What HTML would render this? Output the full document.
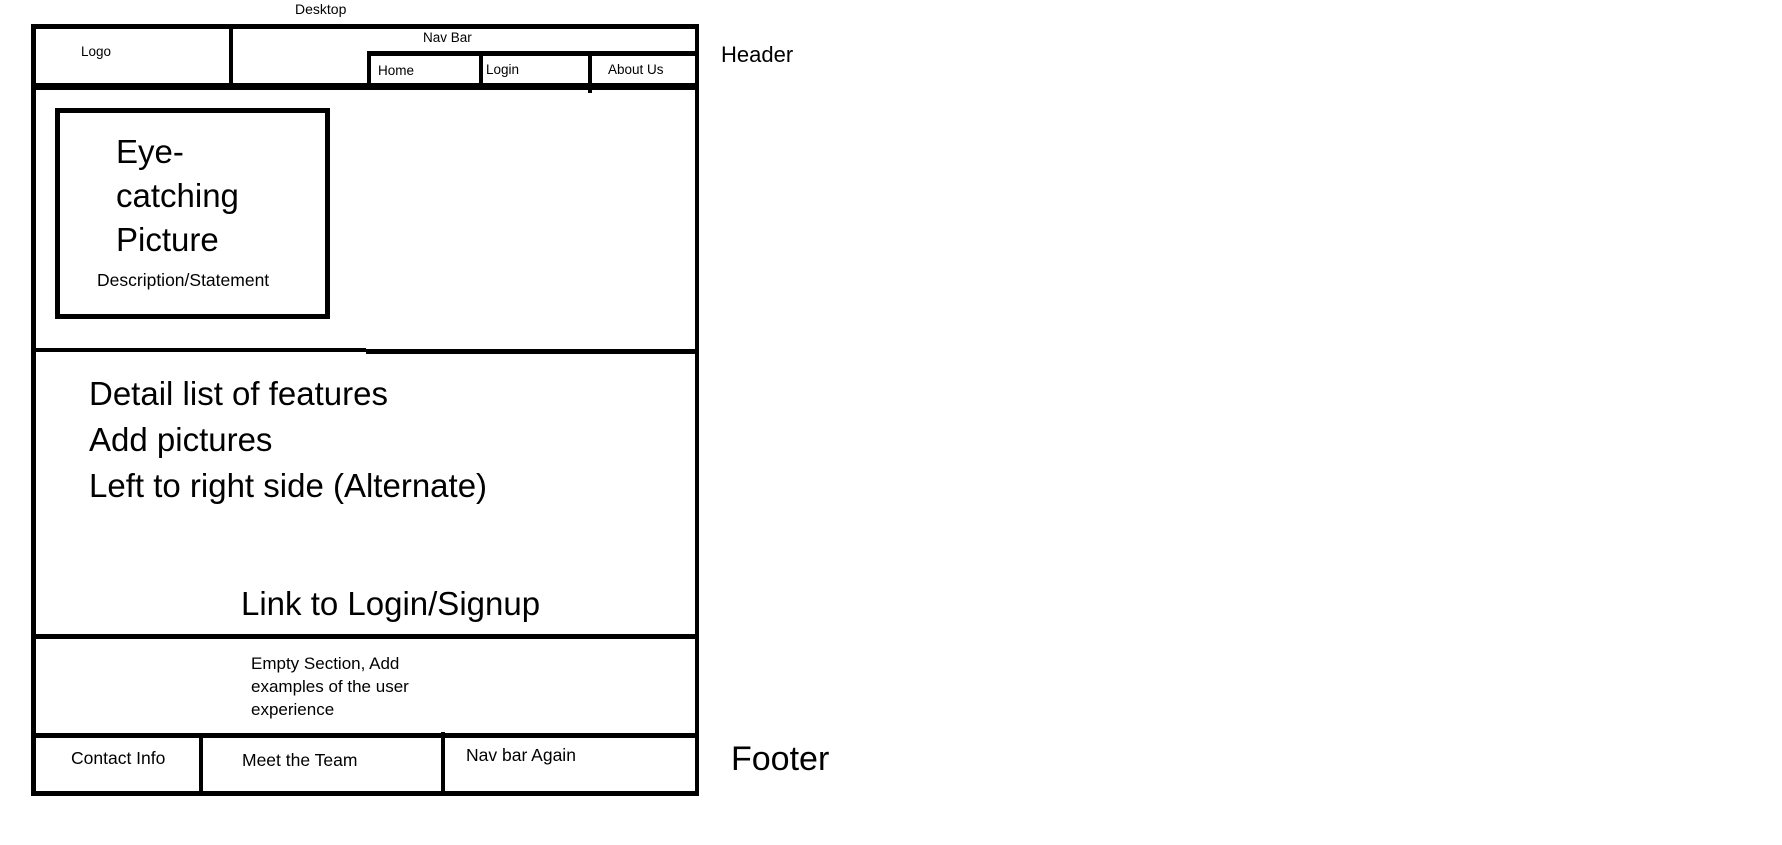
<!DOCTYPE html>
<html><head><meta charset="utf-8"><style>
html,body{margin:0;padding:0;background:#fff;width:1782px;height:845px;overflow:hidden;position:relative;font-family:"Liberation Sans",sans-serif;color:#000}
.b{position:absolute;background:#000}
.t{position:absolute;white-space:nowrap;line-height:1}
</style></head><body>
<div class="t" style="left:295px;top:2px;font-size:14px">Desktop</div>
<div class="b" style="left:31px;top:24px;width:668px;height:5px"></div>
<div class="b" style="left:31px;top:24px;width:5px;height:772px"></div>
<div class="b" style="left:695px;top:24px;width:4px;height:772px"></div>
<div class="b" style="left:31px;top:791px;width:668px;height:5px"></div>
<div class="b" style="left:229px;top:24px;width:4px;height:62px"></div>
<div class="b" style="left:367px;top:51px;width:332px;height:5px"></div>
<div class="b" style="left:367px;top:51px;width:4px;height:36px"></div>
<div class="b" style="left:479px;top:53px;width:4px;height:34px"></div>
<div class="b" style="left:588px;top:53px;width:4px;height:40px"></div>
<div class="b" style="left:31px;top:83px;width:668px;height:7px"></div>
<div class="t" style="left:423px;top:31px;font-size:13.5px">Nav Bar</div>
<div class="t" style="left:81px;top:45px;font-size:13.5px">Logo</div>
<div class="t" style="left:378px;top:64px;font-size:13.5px">Home</div>
<div class="t" style="left:486px;top:63px;font-size:13.5px">Login</div>
<div class="t" style="left:608px;top:63px;font-size:13.5px">About Us</div>
<div class="t" style="left:721px;top:44px;font-size:22px">Header</div>
<div style="position:absolute;left:55px;top:108px;width:265px;height:201px;border:5px solid #000"></div>
<div class="t" style="left:116px;top:130px;font-size:33px;line-height:44px">Eye-<br>catching<br>Picture</div>
<div class="t" style="left:97px;top:272px;font-size:17.5px">Description/Statement</div>
<div class="b" style="left:31px;top:348px;width:335px;height:4px"></div>
<div class="b" style="left:366px;top:349px;width:333px;height:5px"></div>
<div class="t" style="left:89px;top:371px;font-size:33px;line-height:46px">Detail list of features<br>Add pictures<br>Left to right side (Alternate)</div>
<div class="t" style="left:241px;top:587px;font-size:33px">Link to Login/Signup</div>
<div class="b" style="left:31px;top:634px;width:668px;height:5px"></div>
<div class="t" style="left:251px;top:652px;font-size:17px;line-height:23px">Empty Section, Add<br>examples of the user<br>experience</div>
<div class="b" style="left:31px;top:733px;width:668px;height:5px"></div>
<div class="b" style="left:199px;top:737px;width:4px;height:59px"></div>
<div class="b" style="left:441px;top:732px;width:4px;height:64px"></div>
<div class="t" style="left:71px;top:750px;font-size:17.5px">Contact Info</div>
<div class="t" style="left:242px;top:752px;font-size:17.5px">Meet the Team</div>
<div class="t" style="left:466px;top:747px;font-size:17.5px">Nav bar Again</div>
<div class="t" style="left:731px;top:742px;font-size:34px">Footer</div>
</body></html>
